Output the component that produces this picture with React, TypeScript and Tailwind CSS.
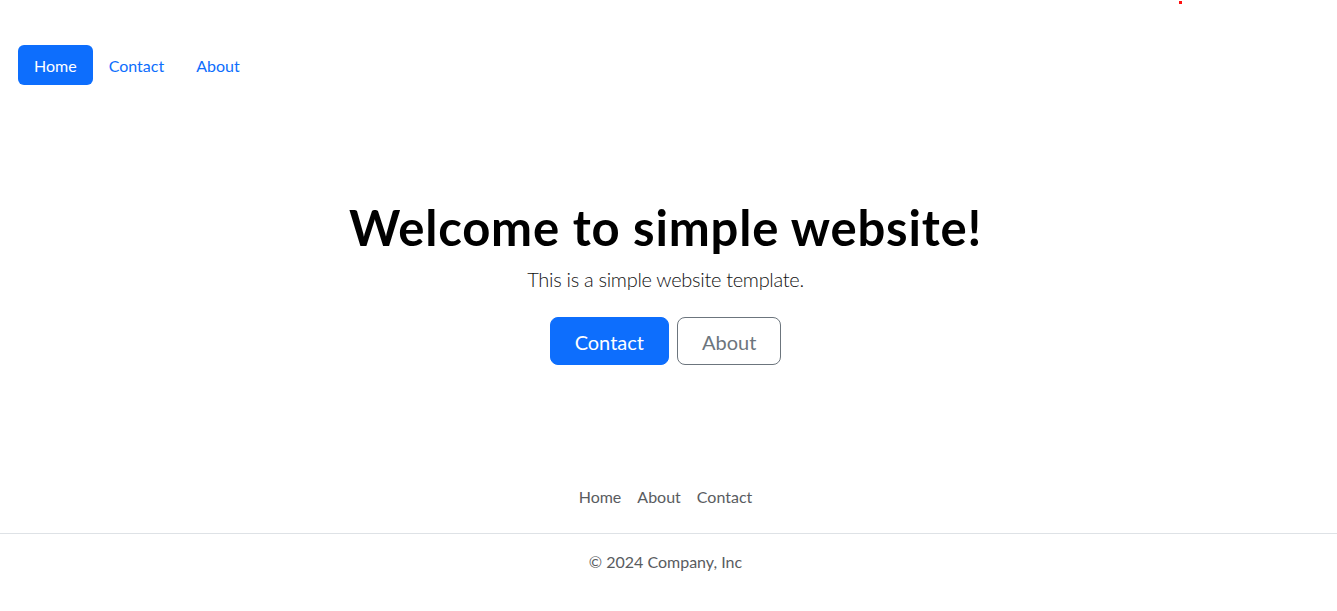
import React from "react";

const font = { fontFamily: '"Segoe UI", Lato, "Noto Sans", sans-serif' };

export default function App() {
    return (
        <div className="relative min-h-[611px] bg-white text-[#212529]" style={font}>
            <span className="absolute left-[1179px] top-[1px] h-[3px] w-[3px] bg-[#ff1010]" />
            <nav className="flex pl-[18px] pt-[45px]">
                <a href="#" className="rounded-md bg-[#0d6efd] px-4 pt-[9px] pb-[7px] text-base leading-6 text-white">Home</a>
                <a href="#" className="px-4 pt-[9px] pb-[7px] text-base leading-6 text-[#0d6efd]">Contact</a>
                <a href="#" className="px-4 pt-[9px] pb-[7px] text-base leading-6 text-[#0d6efd]">About</a>
            </nav>

            <main className="mt-[112px] pr-[6px] text-center">
                <h1 className="text-[49px] font-bold leading-[60px] tracking-[0.8px] text-black">Welcome to simple website!</h1>
                <p className="mt-[7px] text-[20px] font-light leading-[30px] tracking-[-0.3px] text-[#111]">This is a simple website template.</p>
                <div className="mt-[23px] flex justify-center gap-2">
                    <button className="rounded-lg border border-[#0d6efd] bg-[#0d6efd] px-6 pt-[9px] pb-[7px] text-[20px] leading-[30px] text-white">Contact</button>
                    <button className="rounded-lg border border-[#6c757d] px-6 pt-[9px] pb-[7px] text-[20px] leading-[30px] text-[#6c757d]">About</button>
                </div>
            </main>

            <footer className="mt-[112px]">
                <ul className="flex justify-center border-b border-[#dee2e6] pr-[6px] pb-4">
                    <li><a href="#" className="block px-2 py-2 text-base leading-6 text-[#595c5f]">Home</a></li>
                    <li><a href="#" className="block px-2 py-2 text-base leading-6 text-[#595c5f]">About</a></li>
                    <li><a href="#" className="block px-2 py-2 text-base leading-6 text-[#595c5f]">Contact</a></li>
                </ul>
                <p className="mt-4 pr-[6px] text-center text-base leading-6 text-[#595c5f]">© 2024 Company, Inc</p>
            </footer>
        </div>
    );
}
